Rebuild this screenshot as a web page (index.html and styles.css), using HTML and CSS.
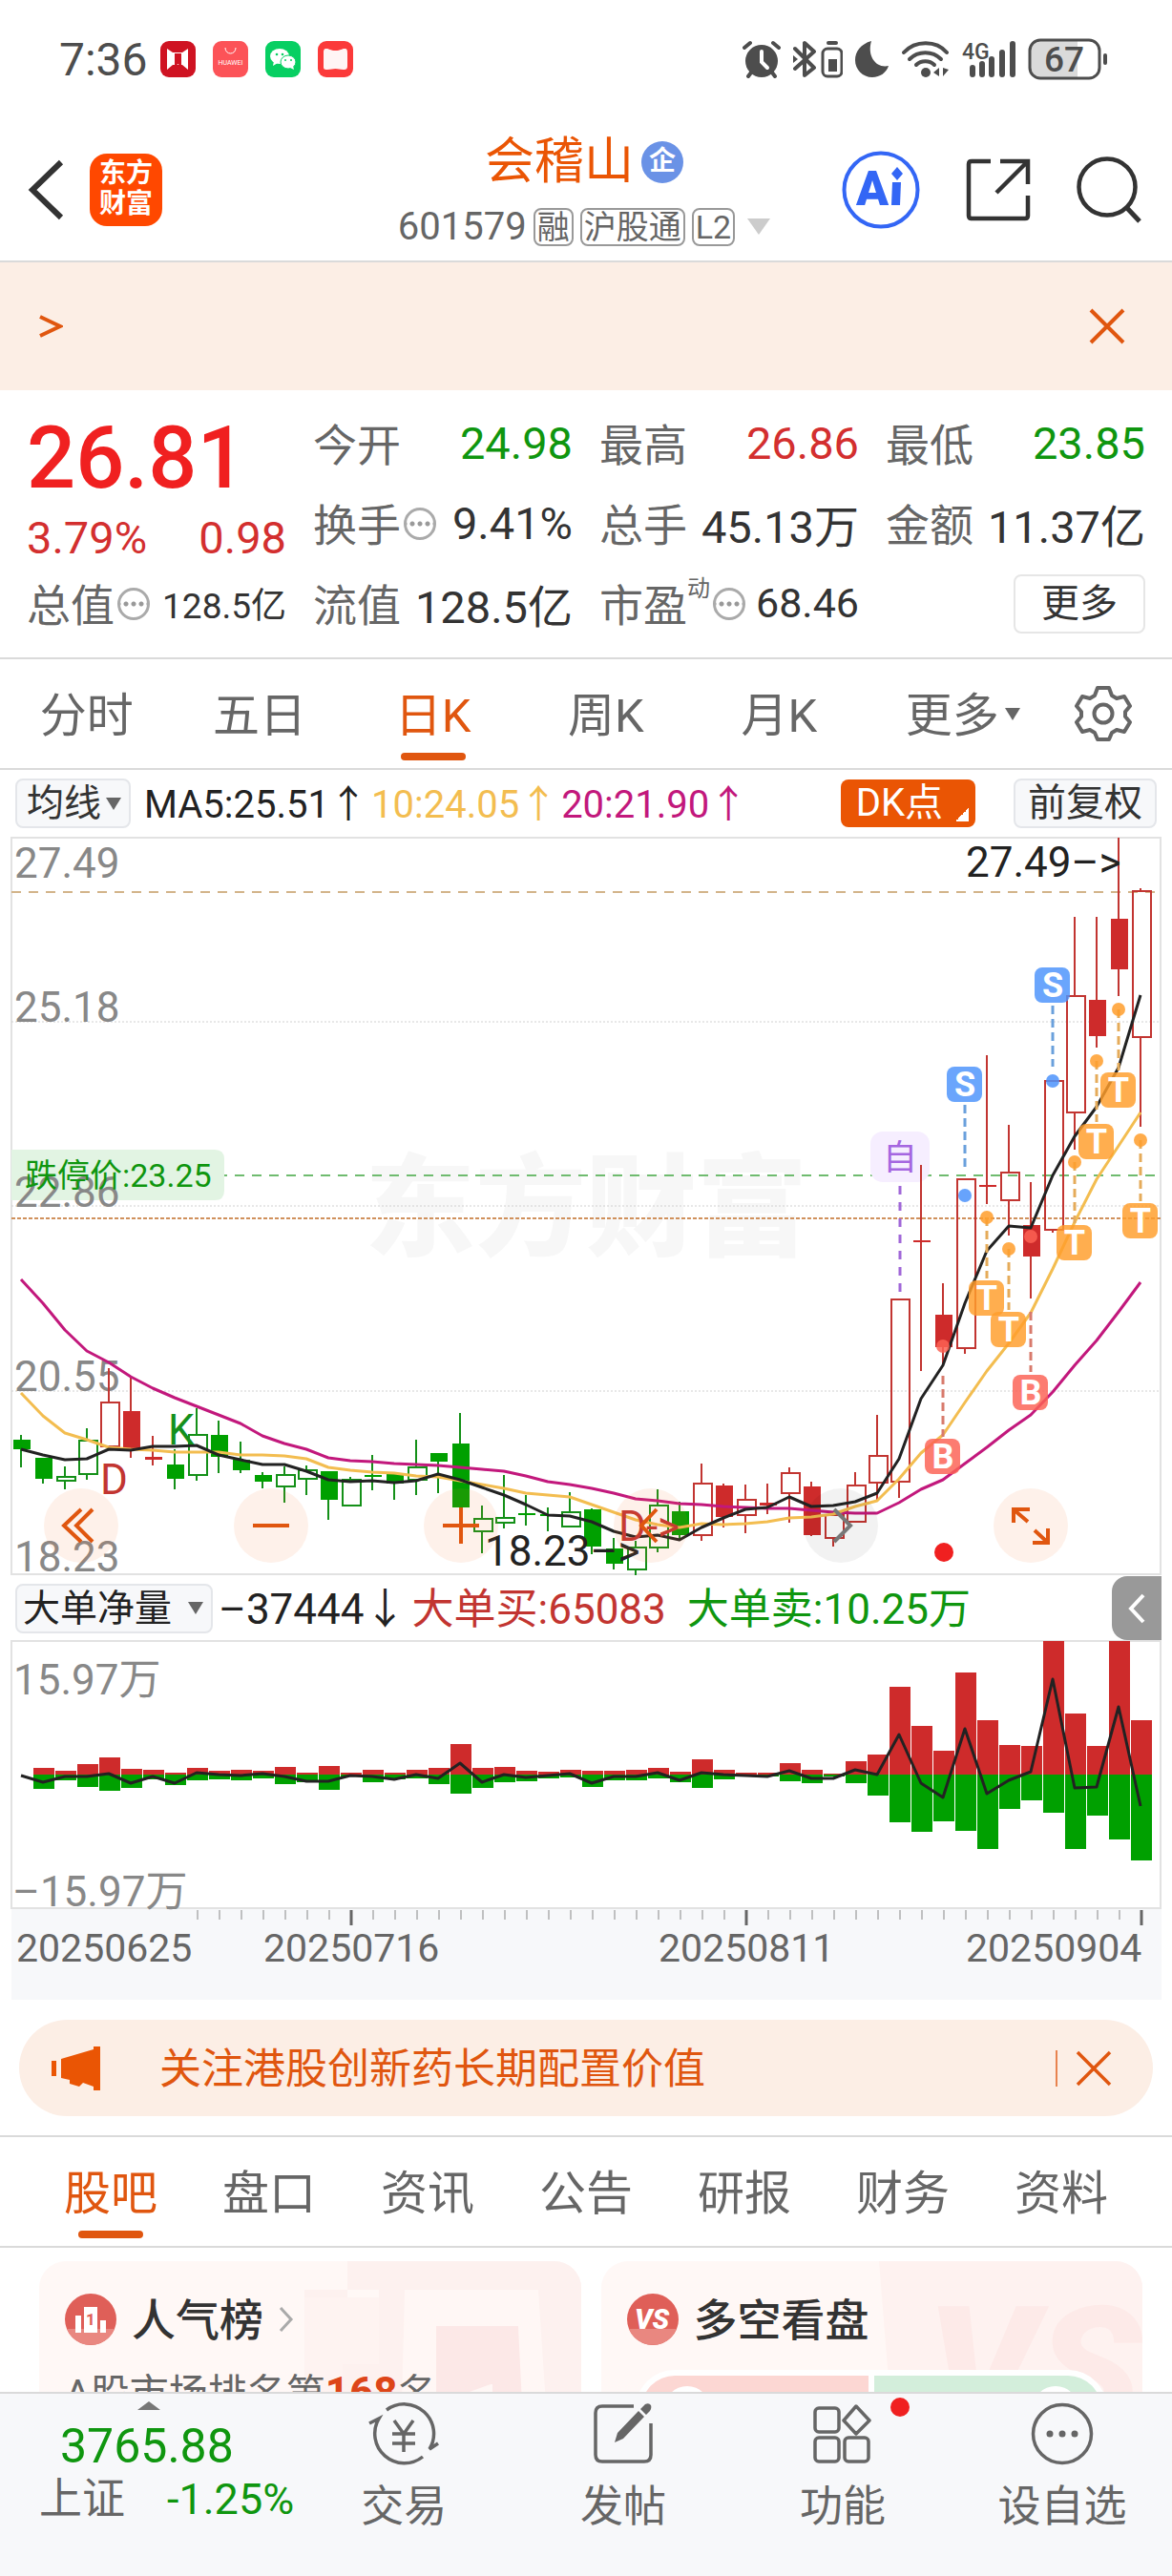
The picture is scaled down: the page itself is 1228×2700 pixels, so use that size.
FILE: index.html
```html
<!DOCTYPE html>
<html lang="zh-CN">
<head>
  <meta charset="UTF-8">
  <meta name="viewport" content="width=device-width, initial-scale=1.0">
  <title>会稽山 601579</title>
  <link rel="stylesheet" href="styles.css">
</head>
<body>
  <div class="status-bar">
    <span class="time">7:36</span>
    <div class="status-apps">
      <svg width="37" height="38" viewBox="0 0 37 38">
        <rect width="37" height="38" rx="9" fill="#cf1322"/>
        <path d="M7 8l6 4h10l6-4v22l-6-5H13l-6 5z" fill="#fff"/>
        <path d="M15 13h7v14l-3.500-3-3.500 3z" fill="#cf1322"/>
      </svg>
      <svg width="37" height="38" viewBox="0 0 37 38">
        <rect width="37" height="38" rx="9" fill="#fc5358"/>
        <path d="M13 7c0 8 11 8 11 0" fill="none" stroke="#fff" stroke-width="1"/>
        <text x="18.500" y="25" class="huawei">HUAWEI</text>
      </svg>
      <svg width="37" height="38" viewBox="0 0 37 38">
        <rect width="37" height="38" rx="9" fill="#07cf62"/>
        <ellipse cx="15" cy="16" rx="10" ry="8" fill="#fff"/>
        <path d="M9 21l-1 5 5-3z" fill="#fff"/>
        <ellipse cx="24" cy="22" rx="8" ry="7" fill="#fff" stroke="#07cf62" stroke-width="1"/>
        <path d="M26 28l4 2-1-4z" fill="#fff"/>
        <circle cx="12" cy="14" r="1.300" fill="#07cf62"/><circle cx="18" cy="14" r="1.300" fill="#07cf62"/>
        <circle cx="21" cy="20" r="1" fill="#07cf62"/><circle cx="27" cy="20" r="1" fill="#07cf62"/>
      </svg>
      <svg width="37" height="38" viewBox="0 0 37 38">
        <rect width="37" height="38" rx="9" fill="#fb3a3a"/>
        <path d="M9 8c3 0 4 2 9.500 2S25 8 28 8c3 0 3 2 3 5v13c0 3-1 4-4 4-4 0-5-1-8.500-1S14 30 10 30s-4-1-4-4V13c0-3 0-5 3-5z" fill="#fff5f5"/>
      </svg>
    </div>
    <div class="status-icons">
      <svg width="40" height="40" viewBox="0 0 40 40">
        <circle cx="20" cy="22" r="17" fill="#4d4d4d"/>
        <path d="M2 8l6-5M38 8l-6-5M9 34l-3 4M31 34l3 4" stroke="#4d4d4d" stroke-width="4" stroke-linecap="round"/>
        <path d="M20 12v11l6 6" fill="none" stroke="#fff" stroke-width="4" stroke-linecap="round"/>
      </svg>
      <svg width="52" height="40" viewBox="0 0 52 40">
        <path d="M2 30L22 12 12 3v34l10-8L2 9" fill="none" stroke="#4d4d4d" stroke-width="4" stroke-linejoin="round" stroke-linecap="round"/>
        <path d="M0 16l5 4-5 4z" fill="#4d4d4d"/>
        <rect x="31" y="9" width="20" height="29" rx="5" fill="none" stroke="#4d4d4d" stroke-width="3"/>
        <rect x="35" y="1" width="12" height="4" rx="2" fill="#4d4d4d"/>
        <rect x="37" y="20" width="9" height="13" fill="#4d4d4d"/>
      </svg>
      <svg width="36" height="40" viewBox="0 0 36 40">
        <path d="M17 1C6 4 0 12 0 21c0 10 8 18 18 18 8 0 15-5 17-12-12 3-23-9-18-26z" fill="#4d4d4d"/>
      </svg>
      <svg width="50" height="40" viewBox="0 0 50 40">
        <g fill="none" stroke="#4d4d4d" stroke-width="4" stroke-linecap="round">
          <path d="M2 13C14 0 36 0 47 13"/><path d="M8 20c9-9 24-9 33 0"/><path d="M15 26c5-5 14-5 19 0"/>
        </g>
        <circle cx="25" cy="34" r="5" fill="#4d4d4d"/>
        <path d="M39 29v9l-6-4zM43 29v9l6-7z" fill="#4d4d4d"/>
      </svg>
      <svg width="56" height="40" viewBox="0 0 56 40">
        <text x="0" y="20" class="net">4G</text>
        <path d="M11 29v7M21 25v11M31 20v16M42 13v23M53 4v32" stroke="#4d4d4d" stroke-width="6" stroke-linecap="round"/>
      </svg>
      <svg width="84" height="44" viewBox="0 0 84 44">
        <rect x="2" y="2" width="73" height="40" rx="11" fill="#fff"/>
        <path d="M13 2h39v40H13A11 11 0 0 1 2 31V13A11 11 0 0 1 13 2z" fill="#dadada"/>
        <rect x="2" y="2" width="73" height="40" rx="11" fill="none" stroke="#4d4d4d" stroke-width="3"/>
        <rect x="79" y="16" width="4" height="12" rx="2" fill="#4d4d4d"/>
        <text x="38" y="35" class="battery">67</text>
      </svg>
    </div>
  </div>

  <header class="header">
    <div class="header-left">
      <button class="icon-btn" aria-label="返回">
        <svg width="40" height="64" viewBox="0 0 40 64"><path d="M36 3L6 32l30 29" fill="none" stroke="#333" stroke-width="6"/></svg>
      </button>
      <a class="logo" href="#">东方<br>财富</a>
    </div>
    <div class="title">
      <h1>会稽山<span class="corp">企</span></h1>
      <div class="code">601579<span class="tag">融</span><span class="tag">沪股通</span><span class="tag">L2</span><i class="caret"></i></div>
    </div>
    <div class="header-right">
      <button class="icon-btn" aria-label="Ai">
        <svg width="82" height="82" viewBox="0 0 82 82">
          <circle cx="41" cy="41" r="38.500" fill="none" stroke="#3366f5" stroke-width="4"/>
          <text x="15" y="57" class="ai">A</text>
          <path d="M53 33h9l-1 24h-9z" fill="#3366f5"/>
          <path d="M58 17l6 7-6 7-6-7z" fill="#3366f5"/>
        </svg>
      </button>
      <button class="icon-btn" aria-label="分享">
        <svg width="68" height="68" viewBox="0 0 68 68">
          <path d="M26 4H6Q3 4 3 7v54q0 3 3 3h56q3 0 3-3V40M36 4h29v24M64 5L32 37" fill="none" stroke="#333" stroke-width="4.500"/>
        </svg>
      </button>
      <button class="icon-btn" aria-label="搜索">
        <svg width="68" height="70" viewBox="0 0 68 70">
          <circle cx="32" cy="32" r="29.500" fill="none" stroke="#333" stroke-width="4.500"/>
          <path d="M52 53l14 15" stroke="#333" stroke-width="5"/>
        </svg>
      </button>
    </div>
  </header>

  <main class="content">
    <div class="notice">
      <a href="#" aria-label="查看公告"><svg width="26" height="26" viewBox="0 0 26 26"><path d="M2 3l21 10L2 23" fill="none" stroke="#e0560f" stroke-width="4"/></svg></a>
      <button class="icon-btn" aria-label="关闭">
        <svg width="40" height="40" viewBox="0 0 40 40"><path d="M3 3l34 34M37 3L3 37" stroke="#e0560f" stroke-width="4"/></svg>
      </button>
    </div>

    <section class="quote">
      <div class="quote-main">
        <div class="price">26.81</div>
        <div class="change"><span>3.79%</span><span>0.98</span></div>
        <div class="cell"><span>总值</span><i class="info"></i><b class="small">128.5亿</b></div>
      </div>
      <div class="quote-grid">
        <div class="cell"><span>今开</span><b class="down">24.98</b></div>
        <div class="cell"><span>最高</span><b class="up">26.86</b></div>
        <div class="cell"><span>最低</span><b class="down">23.85</b></div>
        <div class="cell"><span>换手</span><i class="info"></i><b>9.41%</b></div>
        <div class="cell"><span>总手</span><b>45.13万</b></div>
        <div class="cell"><span>金额</span><b>11.37亿</b></div>
        <div class="cell"><span>流值</span><b>128.5亿</b></div>
        <div class="cell"><span>市盈<sup>动</sup></span><i class="info"></i><b class="medium">68.46</b></div>
        <div class="cell"><button class="more">更多</button></div>
      </div>
    </section>

    <nav class="period-tabs">
      <button>分时</button>
      <button>五日</button>
      <button class="active">日K</button>
      <button>周K</button>
      <button>月K</button>
      <button>更多<i class="caret dark"></i></button>
      <button class="gear" aria-label="设置">
        <svg width="60" height="60" viewBox="0 0 60 60">
          <path d="M24 3h12l3 8 5 3 8-2 6 10-5 6v5l5 6-6 10-8-2-5 3-3 7H24l-3-7-5-3-8 2-6-10 5-6v-5l-5-6L8 12l8 2 5-3z" fill="none" stroke="#666" stroke-width="4" stroke-linejoin="round"/>
          <circle cx="30" cy="30" r="9.500" fill="none" stroke="#666" stroke-width="4"/>
        </svg>
      </button>
    </nav>

    <div class="ma-row">
      <span class="select"><select aria-label="主图指标"><option>均线</option></select><i class="caret dark"></i></span>
      <span class="ma5">MA5:25.51↑</span>
      <span class="ma10">10:24.05↑</span>
      <span class="ma20">20:21.90↑</span>
      <button class="dk">DK点</button>
      <button class="chip">前复权</button>
    </div>

    <div class="kline">
      <svg id="kline" viewBox="0 -1 1228 775"></svg>
      <div class="chart-tools">
        <button aria-label="最左"><svg viewBox="0 0 78 78"><path d="M39 22L21 39l18 17M51 22L34 39l17 17"/></svg></button>
        <button aria-label="缩小"><svg viewBox="0 0 78 78"><path d="M20 39h38"/></svg></button>
        <button aria-label="放大"><svg viewBox="0 0 78 78"><path d="M20 39h38M39 20v38"/></svg></button>
        <button aria-label="向左"><svg viewBox="0 0 78 78"><path d="M45 22L29 39l16 17"/></svg></button>
        <button class="off" aria-label="向右"><svg viewBox="0 0 78 78"><path d="M32 22l17 17-17 17"/></svg></button>
        <button aria-label="全屏"><svg viewBox="0 0 78 78"><path d="M21 36V22h17M22 23l14 12M57 42v15H41M56 56L43 44"/></svg></button>
      </div>
    </div>

    <div class="flow-row">
      <span class="select"><select aria-label="副图指标"><option>大单净量</option></select><i class="caret dark"></i></span>
      <span class="net-value">–37444↓</span>
      <span class="buy">大单买:65083</span>
      <span class="sell">大单卖:10.25万</span>
      <button class="handle" aria-label="展开">
        <svg width="22" height="34" viewBox="0 0 22 34"><path d="M18 3L5 17l13 14" fill="none" stroke="#fff" stroke-width="4"/></svg>
      </button>
    </div>
    <svg id="flow" viewBox="0 -1 1228 377"></svg>

    <div class="promo">
      <svg width="52" height="46" viewBox="0 0 52 46">
        <path d="M0 15h5v16H0zM10 13L44 3V0h7v46h-7v-4l-11-4-4 4-10-3v-4l-9-2z" fill="#ea5504"/>
      </svg>
      <a href="#">关注港股创新药长期配置价值</a>
      <button class="icon-btn" aria-label="关闭">
        <svg width="38" height="38" viewBox="0 0 38 38"><path d="M2 2l34 34M36 2L2 36" stroke="#e0560f" stroke-width="3.500"/></svg>
      </button>
    </div>

    <nav class="info-tabs">
      <button class="active">股吧</button>
      <button>盘口</button>
      <button>资讯</button>
      <button>公告</button>
      <button>研报</button>
      <button>财务</button>
      <button>资料</button>
    </nav>

    <div class="cards">
      <section class="card">
        <svg class="card-bg" width="300" height="150" viewBox="0 0 300 150">
          <path d="M55 0h245v150H20V98h68V30H10V40h45z" fill="#fdf1ef"/>
          <path d="M10 38h78v70H50v42H10z" fill="#fef3f1"/>
          <path d="M115 30h140l8 120H112z" fill="#fff7f5"/>
          <path d="M148 68h86l4 82h-90z" fill="#fce8e7"/>
          <text x="160" y="215" class="rank-bg">1</text>
        </svg>
        <h2>
          <svg width="54" height="54" viewBox="0 0 54 54">
            <circle cx="27" cy="27" r="27" fill="#df5f58"/><path d="M2 37a27 27 0 0 0 50 0z" fill="#e98780"/>
            <path d="M11 23h6v18h-6zM20 14h14v27H20zM37 28h6v13h-6z" fill="#fff"/>
            <text x="27" y="33" class="rank">1</text>
          </svg>
          <span>人气榜</span>
          <svg width="16" height="28" viewBox="0 0 16 28"><path d="M2 2l11 12L2 26" fill="none" stroke="#aaa" stroke-width="3"/></svg>
        </h2>
        <p>A股市场排名第<strong>168</strong>名</p>
      </section>
      <section class="card">
        <svg class="card-bg" width="276" height="150" viewBox="0 0 276 150">
          <path d="M0 0h276v150H12z" fill="#fef2f0"/>
          <text x="50" y="175" class="vs-bg">VS</text>
        </svg>
        <h2>
          <svg width="54" height="54" viewBox="0 0 54 54">
            <circle cx="27" cy="27" r="27" fill="#df5f58"/><path d="M2 37a27 27 0 0 0 50 0z" fill="#e98780"/>
            <text x="26" y="37" class="vs">VS</text>
          </svg>
          <span>多空看盘</span>
        </h2>
        <div class="vote">
          <button class="bull"><i></i>看涨</button>
          <button class="bear">看跌<i></i></button>
        </div>
      </section>
    </div>
  </main>

  <footer class="bottom-bar">
    <a class="index" href="#">
      <i class="arrow-up"></i>
      <span class="index-value">3765.88</span>
      <span class="index-row"><span>上证</span><span class="index-rate">-1.25%</span></span>
    </a>
    <button>
      <svg width="76" height="68" viewBox="0 0 76 68">
        <g fill="none" stroke="#666" stroke-width="3.500">
          <path d="M20 9A31 31 0 0 1 65 50l9-6M58 58A31 31 0 0 1 12 18l-10 5"/>
          <path d="M28 20l10 14 10-14M26 34h24M26 44h24M38 34v19"/>
        </g>
      </svg>
      交易
    </button>
    <button>
      <svg width="68" height="68" viewBox="0 0 68 68">
        <path d="M45 5H12Q5 5 5 12v44q0 7 7 7h44q7 0 7-7V23" fill="none" stroke="#666" stroke-width="3.500"/>
        <path d="M25 43l3-10 22-23 6 6-22 23zM52 8l5-5q4-2 6 1 1 3-1 6l-4 4z" fill="#666"/>
      </svg>
      发帖
    </button>
    <button>
      <svg width="68" height="68" viewBox="0 0 68 68">
        <g fill="none" stroke="#666" stroke-width="3.500" stroke-linejoin="round">
          <rect x="5" y="7" width="25" height="25" rx="4"/><rect x="5" y="38" width="25" height="25" rx="4"/>
          <rect x="36" y="38" width="25" height="25" rx="4"/><path d="M48 5l14 15-14 14-13-14z"/>
        </g>
      </svg>
      功能
      <i class="dot"></i>
    </button>
    <button>
      <svg width="68" height="68" viewBox="0 0 68 68">
        <circle cx="34" cy="34" r="30.500" fill="none" stroke="#666" stroke-width="3.500"/>
        <circle cx="21" cy="34" r="3.500" fill="#666"/><circle cx="34" cy="34" r="3.500" fill="#666"/><circle cx="47" cy="34" r="3.500" fill="#666"/>
      </svg>
      设自选
    </button>
  </footer>

  <script src="chart.js"></script>
</body>
</html>
```
FILE: styles.css
```css
* {
  box-sizing: border-box;
  margin: 0;
  padding: 0;
}
body {
  display: flex;
  flex-direction: column;
  height: 100vh;
  overflow: hidden;
  background: #fff;
  color: #333;
  font-family: Roboto, "Noto Sans CJK SC", sans-serif;
  font-size: 40px;
}
button, select {
  border: none;
  background: none;
  color: inherit;
  font: inherit;
  appearance: none;
  cursor: pointer;
}
a {
  color: inherit;
  text-decoration: none;
}
svg {
  display: block;
  flex-shrink: 0;
}
.icon-btn { display: flex; }
.up { color: #d32f2f; }
.down { color: #0f960f; }

.caret {
  display: inline-block;
  border: 12px solid transparent;
  border-top: 17px solid #ccc;
  border-bottom: none;
}
.caret.dark {
  border-width: 8px;
  border-top: 13px solid #666;
  border-bottom: none;
}

/* status bar */
.status-bar {
  display: flex;
  align-items: center;
  height: 124px;
  padding: 0 67px 0 62px;
  flex-shrink: 0;
}
.time {
  font-size: 48px;
  color: #4d4d4d;
}
.status-apps {
  display: flex;
  gap: 18px;
  margin-left: 13px;
}
.status-icons {
  display: flex;
  align-items: center;
  gap: 13px;
  margin-left: auto;
}
.huawei { font-size: 7px; fill: #fff; text-anchor: middle; }
.net { font-size: 23px; font-weight: 500; fill: #4d4d4d; }
.battery { font-size: 37px; font-weight: 500; fill: #4d4d4d; text-anchor: middle; }

/* header */
.header {
  display: grid;
  grid-template-columns: 1fr auto 1fr;
  align-items: center;
  height: 151px;
  padding: 0 32px 0 28px;
  border-bottom: 2px solid #dadada;
  flex-shrink: 0;
}
.header-left {
  display: flex;
  align-items: center;
  gap: 26px;
}
.header-right {
  display: flex;
  align-items: center;
  justify-content: flex-end;
  gap: 48px;
}
.logo {
  width: 76px;
  height: 76px;
  padding-top: 5px;
  border-radius: 18px;
  background: #ff4800;
  color: #fff;
  font-size: 28px;
  font-weight: 700;
  line-height: 32px;
  text-align: center;
}
.title {
  padding-top: 10px;
  text-align: center;
}
.title h1 {
  display: flex;
  align-items: center;
  justify-content: center;
  gap: 8px;
  color: #ea5504;
  font-size: 52px;
  font-weight: 400;
  line-height: 68px;
}
.corp {
  width: 44px;
  height: 44px;
  border-radius: 50%;
  background: #6a92e6;
  color: #fff;
  font-size: 28px;
  font-weight: 700;
  line-height: 42px;
  text-align: center;
}
.code {
  display: flex;
  align-items: center;
  justify-content: center;
  gap: 7px;
  color: #666;
  line-height: 68px;
}
.tag {
  padding: 0 2px;
  border: 2px solid #999;
  border-radius: 8px;
  font-size: 34px;
  line-height: 36px;
}
.code .caret { margin-left: 6px; }
.ai { font-size: 50px; font-weight: 900; fill: #3366f5; }

.content {
  flex: 1;
  min-height: 0;
  overflow: hidden;
}
.notice {
  display: flex;
  align-items: center;
  justify-content: space-between;
  height: 134px;
  padding: 0 48px 0 40px;
  background: #fceee5;
}

/* quote */
.quote {
  display: grid;
  grid-template-columns: minmax(0, 272fr) minmax(0, 872fr);
  gap: 28px;
  padding: 14px 28px;
  border-bottom: 2px solid #dadada;
}
.quote-grid {
  display: grid;
  grid-template-columns: repeat(3, 1fr);
  grid-auto-rows: 84px;
  column-gap: 28px;
}
.price {
  height: 114px;
  color: #f02020;
  font-size: 90px;
  font-weight: 500;
  line-height: 116px;
}
.change {
  display: flex;
  justify-content: space-between;
  color: #d32f2f;
  font-size: 47px;
  line-height: 54px;
}
.cell {
  display: flex;
  align-items: center;
  height: 84px;
  font-size: 47px;
  white-space: nowrap;
}
.cell span {
  padding-bottom: 4px;
  color: #666;
  font-size: 46px;
}
.cell b {
  margin-left: auto;
  padding-bottom: 2px;
  font-weight: 400;
}
.cell .small { font-size: 37px; }
.cell .medium { font-size: 43px; }
.cell sup {
  font-size: 24px;
  line-height: 24px;
  vertical-align: 26px;
}
.info {
  flex-shrink: 0;
  width: 34px;
  height: 34px;
  margin-left: 3px;
  border: 3px solid #aaa;
  border-radius: 50%;
  background: radial-gradient(circle, #999 2px, transparent 3px) 2px 0 / 8px 28px repeat-x;
}
.more {
  width: 138px;
  height: 62px;
  margin-left: auto;
  border: 2px solid #e6e6e6;
  border-radius: 8px;
  font-size: 40px;
  line-height: 56px;
}

/* tabs */
.period-tabs, .info-tabs {
  display: grid;
  border-bottom: 2px solid #dadada;
}
.period-tabs {
  grid-template-columns: repeat(5, 182fr) 204fr 114fr;
  height: 116px;
  padding-right: 4px;
}
.info-tabs {
  grid-template-columns: repeat(7, 1fr);
  height: 118px;
  padding: 0 33px;
  border-top: 2px solid #dadada;
}
.period-tabs button, .info-tabs button {
  position: relative;
  padding-bottom: 6px;
  color: #666;
  font-size: 49px;
}
.period-tabs .gear {
  display: flex;
  align-items: center;
  padding: 0 0 0 16px;
}
.period-tabs .caret {
  margin-left: 6px;
  vertical-align: 12px;
}
.period-tabs .active, .info-tabs .active { color: #e0560f; }
.period-tabs .active::after, .info-tabs .active::after {
  content: "";
  position: absolute;
  left: 50%;
  bottom: 8px;
  width: 68px;
  height: 8px;
  margin-left: -34px;
  border-radius: 4px;
  background: #e0560f;
}

/* main chart */
.ma-row {
  display: flex;
  align-items: center;
  gap: 4px;
  height: 70px;
  padding: 0 16px;
  white-space: nowrap;
}
.select {
  display: flex;
  align-items: center;
  gap: 4px;
  height: 52px;
  padding: 0 8px 0 10px;
  border: 2px solid #e4e6ea;
  border-radius: 8px;
  background: #f7f8fa;
  font-size: 39px;
}
.select select { height: 48px; }
.ma-row .select { margin-right: 10px; }
.ma-row span:not(.select) { padding-bottom: 4px; }
.ma5 { color: #222; }
.ma10 { color: #f3bd50; }
.ma20 { color: #c2187c; }
.dk {
  height: 50px;
  margin-left: auto;
  padding: 0 34px 0 16px;
  border-radius: 8px;
  background: linear-gradient(135deg, transparent 50%, #fff 50%) right 7px bottom 6px / 14px 14px no-repeat #ea5504;
  color: #fff;
  line-height: 48px;
}
.chip {
  height: 52px;
  margin-left: 36px;
  padding: 0 13px;
  border: 2px solid #e4e6ea;
  border-radius: 8px;
  background: #f7f8fa;
  line-height: 46px;
}
.kline { position: relative; }
.kline > svg, #flow {
  width: 100%;
  height: auto;
}
.chart-tools {
  position: absolute;
  left: 46px;
  right: 109px;
  bottom: 14px;
  display: flex;
  justify-content: space-between;
}
.chart-tools button {
  width: 78px;
  height: 78px;
  border-radius: 50%;
  background: rgba(250, 120, 50, 0.1);
}
.chart-tools .off { background: rgba(0, 0, 0, 0.05); }
.chart-tools path {
  fill: none;
  stroke: #e0560f;
  stroke-width: 4;
}
.chart-tools .off path { stroke: #777; }

svg text { white-space: pre; }
.axis { font-size: 44px; fill: #888; }
.mark { font-size: 44px; fill: #222; }
.mark.red { fill: #c23531; }
.mark.green { fill: #14901c; }
.limit { font-size: 34px; fill: #0f960f; }
.watermark { font-size: 116px; font-weight: 900; fill: #f7f7f7; }
.badge { font-size: 36px; font-weight: 700; fill: #fff; text-anchor: middle; }
.badge.self { font-weight: 400; fill: #a566e0; }
.date { font-size: 41px; fill: #666; }

/* order flow chart */
.flow-row {
  display: flex;
  align-items: center;
  gap: 18px;
  height: 67px;
  padding-left: 16px;
  padding-right: 11px;
  color: #222;
  font-size: 44px;
  white-space: nowrap;
}
.flow-row .select {
  gap: 16px;
  padding: 0 8px 0 6px;
}
.flow-row span:not(.select) { padding-bottom: 6px; }
.net-value { margin: 0 -12px; }
.buy {
  margin-right: 4px;
  color: #c23531;
}
.sell { color: #0f960f; }
.handle {
  display: flex;
  align-items: center;
  justify-content: center;
  width: 52px;
  height: 67px;
  margin-left: auto;
  border-radius: 16px 0 0 16px;
  background: #999;
}

.promo {
  display: flex;
  align-items: center;
  height: 101px;
  margin: 21px 20px 20px;
  padding: 0 43px 0 34px;
  border-radius: 51px;
  background: #fceee5;
  color: #e0560f;
  font-size: 44px;
}
.promo a {
  flex: 1;
  margin-left: 61px;
  padding-bottom: 6px;
}
.promo .icon-btn {
  padding-left: 19px;
  border-left: 2px solid #e8834f;
}

/* cards */
.cards {
  display: grid;
  grid-template-columns: 1fr 1fr;
  gap: 21px;
  padding: 14px 31px 0 41px;
}
.card {
  position: relative;
  height: 230px;
  padding: 34px 27px;
  overflow: hidden;
  border-radius: 28px;
  background: #fff8f6;
}
.card-bg {
  position: absolute;
  top: 0;
  right: 0;
}
.card h2 {
  position: relative;
  display: flex;
  align-items: center;
  gap: 16px;
  height: 54px;
  font-size: 46px;
  font-weight: 500;
}
.card h2 span { padding-bottom: 6px; }
.card p {
  position: relative;
  margin-top: 20px;
  color: #666;
  font-size: 41px;
  line-height: 60px;
}
.card strong {
  color: #dd4518;
  font-size: 44px;
}
.rank { font-size: 17px; font-weight: 700; fill: #df5f58; text-anchor: middle; }
.rank-bg { font-size: 120px; font-weight: 700; fill: #fff7f5; }
.vs { font-size: 29px; font-weight: 900; font-style: italic; fill: #fff; text-anchor: middle; }
.vs-bg { font-size: 180px; font-weight: 900; font-style: italic; fill: #fdeae8; }
.vote {
  position: relative;
  display: flex;
  gap: 6px;
  margin: 26px 10px 0 9px;
  border: 6px solid #fff;
  border-radius: 50px;
  background: #fff;
}
.vote button {
  display: flex;
  flex: 1;
  align-items: center;
  justify-content: space-between;
  height: 70px;
  padding: 0 42px 0 24px;
  border-radius: 35px 0 0 35px;
  background: #fcd7d3;
  color: #d9452b;
  font-size: 40px;
}
.vote .bear {
  padding: 0 24px 0 42px;
  border-radius: 0 35px 35px 0;
  background: #d3eedb;
  color: #2c9c4c;
}
.vote i {
  width: 48px;
  height: 48px;
  border-radius: 50%;
  background: #fff;
}

/* bottom bar */
.bottom-bar {
  display: grid;
  grid-template-columns: 308fr repeat(4, 230fr);
  height: 193px;
  border-top: 2px solid #dadada;
  background: #f7f8fa;
  color: #666;
  font-size: 45px;
  flex-shrink: 0;
}
.bottom-bar button {
  position: relative;
  display: flex;
  flex-direction: column;
  align-items: center;
  gap: 10px;
  padding-top: 8px;
  line-height: 66px;
}
.bottom-bar .index {
  padding: 8px 0 0 41px;
  white-space: nowrap;
}
.arrow-up {
  display: block;
  width: 24px;
  margin-left: 103px;
  border: 12px solid transparent;
  border-top: none;
  border-bottom: 9px solid #777;
}
.index-value {
  display: block;
  padding-left: 22px;
  color: #0f960f;
  font-size: 50px;
  line-height: 76px;
}
.index-row {
  display: flex;
  gap: 44px;
  line-height: 36px;
}
.index-rate { color: #0f960f; }
.dot {
  position: absolute;
  top: 4px;
  left: calc(50% + 50px);
  width: 20px;
  height: 20px;
  border-radius: 50%;
  background: #f02020;
}
```
FILE: chart.js
```js
const RED = '#c23531', GREEN = '#149018';
const STEP = 23, X0 = 22, LEFT = 12, RIGHT = 1216;
const x = i => X0 + i * STEP;

// [type, body top, body bottom, high, low]; g/r = outlined, G/R = filled
const candles = [
  ['G',631,641,626,660],['G',650,672,650,677],['g',670,674,659,683],['g',632,667,619,673],
  ['r',592,638,556,638],['R',601,641,565,650],['R',649,652,627,658],['G',657,672,641,683],
  ['g',626,668,598,674],['G',626,649,611,666],['G',652,663,633,666],['G',668,675,665,682],
  ['g',668,680,659,697],['g',663,672,658,689],['G',664,694,664,715],['g',673,700,670,700],
  ['G',668,670,647,684],['G',666,677,665,694],['g',660,673,631,689],['G',645,654,645,687],
  ['G',635,702,603,709],['g',714,727,700,750],['g',713,718,668,724],['G',708,710,689,721],
  ['G',709,711,702,727],['g',707,722,686,722],['G',704,743,703,751],['G',745,761,734,767],
  ['g',744,767,737,773],['g',700,744,683,749],['G',706,731,696,737],['r',677,731,656,737],
  ['R',679,712,677,723],['r',694,710,678,729],['R',697,700,677,709],['r',666,687,660,718],
  ['R',680,731,675,732],['r',710,734,710,743],['r',679,717,665,717],['r',648,676,605,695],
  ['r',484,675,484,692],['R',422,424,343,559],['R',500,534,467,554],['r',358,535,358,541],
  ['R',364,366,228,384],['r',351,380,301,417],['R',406,439,361,483],['r',255,411,255,414],
  ['r',166,288,83,327],['R',170,208,83,220],['R',85,138,0,166],['r',56,209,53,303]
];
const ma5 = [641,647,652,651,641,642,638,638,637,647,652,657,657,664,673,675,674,676,674,667,673,681,689,699,710,711,717,727,733,731,736,723,713,704,702,691,701,700,696,687,651,588,553,488,433,407,409,354,313,282,241,165];
const ma10 = [582,606,624,631,639,641,642,644,644,644,647,647,648,651,660,663,665,666,669,670,674,678,682,687,689,691,699,707,715,720,723,719,720,719,717,713,712,709,701,695,672,645,626,592,559,530,498,452,403,358,323,288];
const ma20 = [463,488,516,538,550,565,577,587,596,605,614,627,635,641,650,653,654,656,657,658,660,662,664,669,675,678,682,687,693,695,698,699,701,702,703,703,705,707,708,708,697,683,673,656,639,621,605,581,553,527,497,466];

// [letter, candle index, dot, dash start, dash end, badge top]
const signals = [
  ['S',43,375,280,345,240],['S',47,255,176,240,136],
  ['T',44,398,398,462,464],['T',45,431,431,495,497],['T',48,340,340,404,406],
  ['T',49,234,234,298,300],['T',50,180,180,244,246],['T',51,317,317,381,383],
  ['B',42,533,564,628,630],['B',46,418,497,560,563]
];
const colors = { S: '#4c93fb', T: '#ff9d2b', B: '#fb6254' };
const dashes = { S: '#6aa0dc', T: '#e5ab5a', B: '#d87a6c' };

function hline(y, color, dash, width) {
  return `<line x1="${LEFT}" x2="${RIGHT}" y1="${y}" y2="${y}" stroke="${color}" stroke-width="${width}" stroke-dasharray="${dash}"/>`;
}

function polyline(values, color, width) {
  return `<polyline points="${values.map((v, i) => x(i) + ',' + v).join(' ')}" fill="none" stroke="${color}" stroke-width="${width}" stroke-linejoin="round"/>`;
}

function candle(c, i) {
  const [type, top, bottom, high, low] = c;
  const up = type.toLowerCase() === 'r';
  const line = up ? RED : GREEN;
  const filled = type === 'R' || type === 'G';
  const wick = `<path d="M${x(i)} ${high}V${top}M${x(i)} ${bottom}V${low}" stroke="${line}" stroke-width="2"/>`;
  if (filled) {
    return wick + `<rect x="${x(i) - 8}" y="${top}" width="18" height="${bottom - top}" fill="${up ? '#ce2b2b' : '#00a000'}"/>`;
  }
  return wick + `<rect x="${x(i) - 8}" y="${top}" width="19" height="${bottom - top}" fill="none" stroke="${line}" stroke-width="2"/>`;
}

function signal(s) {
  const [letter, i, dot, from, to, top] = s;
  const cx = x(i);
  return `<line x1="${cx}" x2="${cx}" y1="${from}" y2="${to}" stroke="${dashes[letter]}" stroke-width="3" stroke-dasharray="9 5"/>
    <circle cx="${cx}" cy="${dot}" r="7" fill="${colors[letter]}" fill-opacity="0.85"/>
    <rect x="${cx - 19}" y="${top}" width="37" height="37" rx="8" fill="${colors[letter]}" fill-opacity="0.83"/>
    <text class="badge" x="${cx}" y="${top + 31}">${letter}</text>`;
}

function drawKline() {
  let s = '<text class="watermark" x="382" y="429">东方财富</text>';
  s += `<rect x="${LEFT}" y="0" width="${RIGHT - LEFT}" height="772" fill="none" stroke="#e2e2e2" stroke-width="2"/>`;
  s += [193, 386, 580].map(y => hline(y, '#d0d0d0', '2 2', 1)).join('');
  s += hline(57, '#d3b48a', '10 8', 2);
  s += hline(354, '#6fbb6f', '10 8', 2);
  s += hline(399, '#d0915c', '4 2', 2);
  s += '<path d="M12 327h213q10 0 10 10v33q0 10-10 10H12z" fill="#e2f4e3"/>';
  s += [['27.49',42],['25.18',193],['22.86',387],['20.55',580],['18.23',769]]
    .map(t => `<text class="axis" x="15" y="${t[1]}">${t[0]}</text>`).join('');
  s += '<text class="limit" x="26" y="366">跌停价:23.25</text>';
  s += '<rect x="912" y="308" width="62" height="53" rx="13" fill="#f6eeff"/><text class="badge self" x="943" y="348">自</text>';
  s += '<line x1="943" x2="943" y1="365" y2="484" stroke="#a066d8" stroke-width="3" stroke-dasharray="9 8"/>';
  s += candles.map(candle).join('');
  s += polyline(ma20, '#c2187c', 3) + polyline(ma10, '#f3bd50', 3) + polyline(ma5, '#222', 3);
  s += signals.map(signal).join('');
  s += '<text class="mark red" x="105" y="688">D</text><text class="mark green" x="176" y="636">K</text>';
  s += '<text class="mark red" x="648" y="737">D-&gt;</text>';
  s += '<text class="mark" x="1012" y="41">27.49–&gt;</text><text class="mark" x="508" y="763">18.23–&gt;</text>';
  s += '<circle cx="989" cy="749" r="10" fill="#f02020"/>';
  document.getElementById('kline').innerHTML = s;
}

// large order buy / sell / net heights
const buy = [0,7,4,11,18,6,5,2,7,4,5,4,8,2,9,2,5,2,5,7,32,7,8,4,3,5,4,4,5,7,3,16,5,2,2,12,5,1,14,21,92,51,25,107,57,31,30,140,64,30,140,57];
const sell = [0,15,6,13,17,14,5,11,6,5,6,4,10,8,16,2,8,5,4,10,20,14,8,7,4,3,13,6,6,4,8,14,5,2,2,7,9,2,9,22,50,60,49,59,78,36,27,40,78,43,68,90];
const net = [1,8,2,2,-1,9,2,9,-2,0,1,-1,2,7,7,1,2,5,0,4,-12,8,0,3,1,-1,9,2,2,-2,6,-2,0,1,2,-4,4,4,-5,0,-42,9,24,-48,20,6,-3,-100,14,13,-71,33];

function drawFlow() {
  const mid = 140;
  let s = `<rect x="${LEFT}" y="0" width="${RIGHT - LEFT}" height="280" fill="#fff" stroke="#e2e2e2" stroke-width="2"/>`;
  s += `<rect x="${LEFT}" y="281" width="1205" height="95" fill="#f7f8fa"/>`;
  s += '<text class="axis" x="14" y="56">15.97万</text><text class="axis" x="13" y="278">–15.97万</text>';
  for (let i = 1; i < buy.length; i++) {
    s += `<rect x="${x(i) - 10}" y="${mid - buy[i]}" width="22" height="${buy[i]}" fill="#ce2b2b"/>`;
    s += `<rect x="${x(i) - 10}" y="${mid}" width="22" height="${sell[i]}" fill="#00a000"/>`;
  }
  s += polyline(net.map(v => mid + v), '#222', 3);
  for (let i = 8; i < 52; i++) {
    const long = (i - 15) % 18 === 0;
    s += `<path d="M${x(i) + 1} 282v${long ? 16 : 10}" stroke="${long ? '#666' : '#888'}" stroke-width="${long ? 3 : 1}"/>`;
  }
  s += [['20250625',17],['20250716',276],['20250811',690],['20250904',1012]]
    .map(t => `<text class="date" x="${t[1]}" y="336">${t[0]}</text>`).join('');
  document.getElementById('flow').innerHTML = s;
}

drawKline();
drawFlow();
```
